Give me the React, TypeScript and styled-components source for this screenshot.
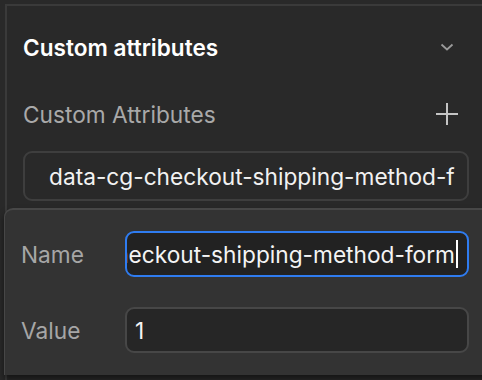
import React from "react";
import styled, { createGlobalStyle } from "styled-components";

const Global = createGlobalStyle`
  html, body { margin: 0; padding: 0; background: #292929; }
  body { font-family: Inter, "Noto Sans", sans-serif; -webkit-font-smoothing: antialiased; }
  * { box-sizing: border-box; }
`;

const Frame = styled.div`
  width: 482px;
  height: 380px;
  overflow: hidden;
  background: #292929;
  position: relative;
`;

const Panel = styled.div`
  margin-left: 5px;
  margin-top: 4px;
  height: 376px;
  border-left: 2px solid #3a3a3a;
  border-top: 2px solid #3a3a3a;
  display: flex;
  flex-direction: column;
`;

const Header = styled.div`
  display: flex;
  align-items: center;
  justify-content: space-between;
  padding: 18px 28px 0 16px;
  height: 64px;
`;

const Title = styled.h2`
  margin: 0;
  font-size: 22.6px;
  font-weight: 600;
  color: #ffffff;
`;

const Section = styled.div`
  padding: 0 13px 0 16px;
  display: flex;
  flex-direction: column;
`;

const LabelRow = styled.div`
  display: flex;
  align-items: center;
  justify-content: space-between;
  height: 36px;
  margin-top: 26px;
  padding-right: 10px;
`;

const Label = styled.span`
  font-size: 22.7px;
  color: #a9a9a9;
`;

const ListItem = styled.div`
  margin-top: 19px;
  height: 50px;
  border: 2px solid #3e3e3e;
  border-radius: 9px;
  display: flex;
  align-items: center;
  padding: 0 12px 0 24px;
  font-size: 22.7px;
  color: #f2f2f2;
  white-space: nowrap;
`;

const ItemText = styled.span`
  overflow: hidden;
  flex: 1;
`;

const Popover = styled.div`
  position: absolute;
  left: 4px;
  top: 208px;
  right: -20px;
  height: 167px;
  background: #333333;
  border-top: 2px solid #474747;
  border-left: 1px solid #474747;
  border-top-left-radius: 9px;
  box-shadow: 0 4px 6px rgba(0, 0, 0, 0.5);
  display: grid;
  grid-template-columns: 104px 344px;
  row-gap: 30px;
  align-content: start;
  padding: 21px 0 0 16px;
`;

const FieldLabel = styled.label`
  font-size: 22.7px;
  color: #a6a6a6;
  display: flex;
  align-items: center;
`;

const Field = styled.div<{ $focused?: boolean }>`
  height: 46px;
  border-radius: 9px;
  border: 2px solid ${(p) => (p.$focused ? "#2f7cf0" : "#474747")};
  background: ${(p) => (p.$focused ? "#222222" : "#262626")};
  display: flex;
  align-items: center;
  justify-content: ${(p) => (p.$focused ? "flex-end" : "flex-start")};
  padding: 0 9px 0 8px;
  overflow: hidden;
  font-size: 22.7px;
  color: #f4f4f4;
  white-space: nowrap;
`;

const Caret = styled.span`
  display: inline-block;
  width: 2px;
  height: 28px;
  background: #ffffff;
  margin-left: 1px;
  flex: none;
`;

const Chevron = () => (
  <svg width="14" height="10" viewBox="0 0 14 10" fill="none">
    <path d="M1.5 2.5 L7 7.5 L12.5 2.5" stroke="#9a9a9a" strokeWidth="1.8" />
  </svg>
);

const Plus = () => (
  <svg width="24" height="24" viewBox="0 0 24 24" fill="none">
    <path d="M12 1 V23 M1 12 H23" stroke="#c4c4c4" strokeWidth="2" />
  </svg>
);

export default function App() {
  return (
    <Frame>
      <Global />
      <Panel>
        <Header>
          <Title>Custom attributes</Title>
          <Chevron />
        </Header>
        <Section>
          <LabelRow>
            <Label>Custom Attributes</Label>
            <Plus />
          </LabelRow>
          <ListItem>
            <ItemText>data-cg-checkout-shipping-method-f</ItemText>
          </ListItem>
        </Section>
      </Panel>
      <Popover>
        <FieldLabel>Name</FieldLabel>
        <Field $focused>
          <span>data-cg-checkout-shipping-method-form</span>
          <Caret />
        </Field>
        <FieldLabel>Value</FieldLabel>
        <Field>1</Field>
      </Popover>
    </Frame>
  );
}
